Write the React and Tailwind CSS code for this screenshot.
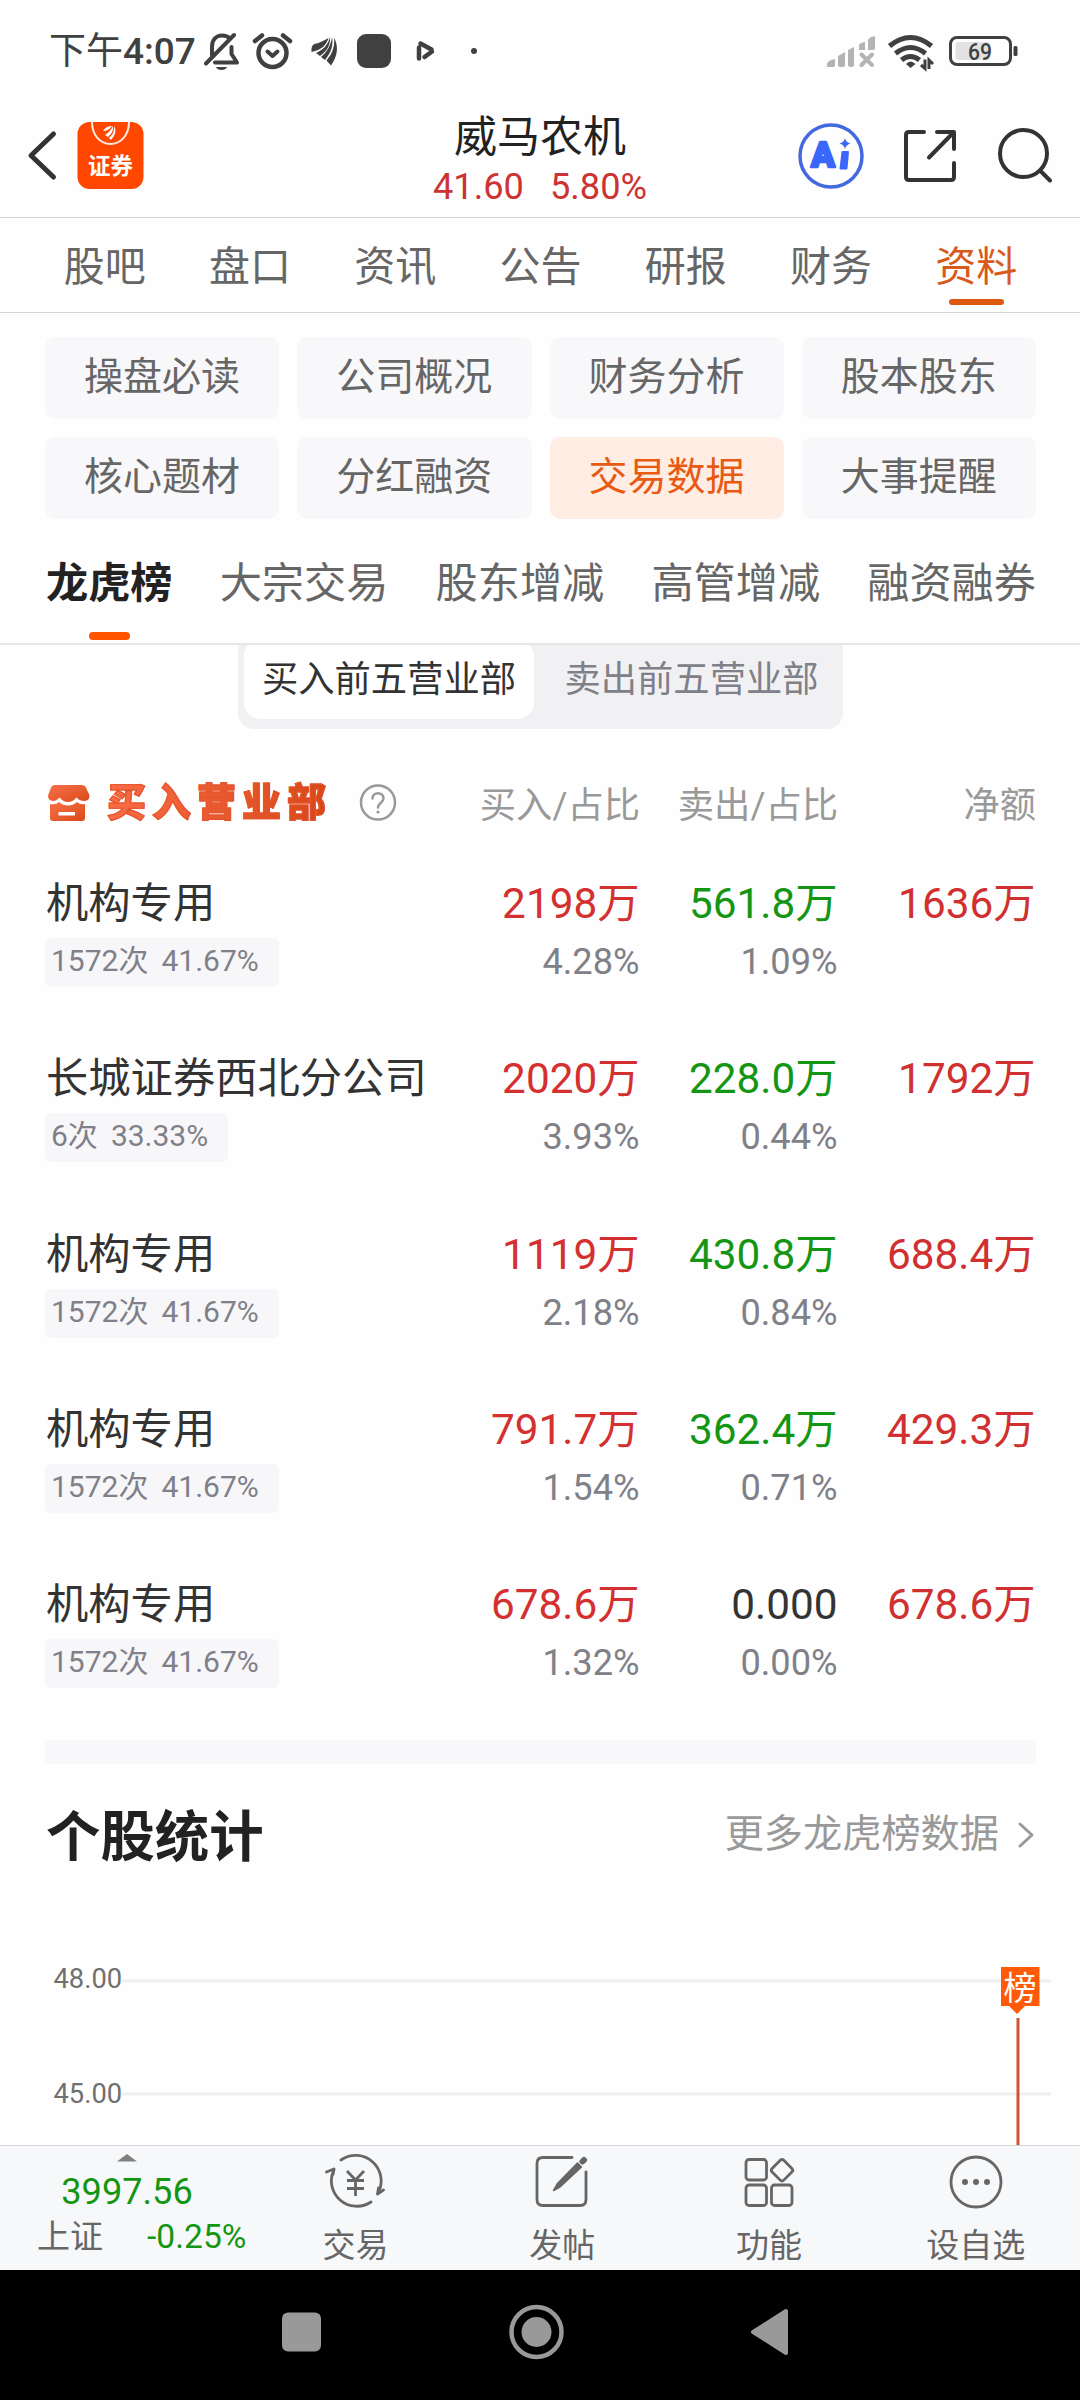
import React from "react";

function StatusBar() {
  return (
    <div className="flex h-[104px] items-start pl-[49px] pt-[31px] text-[#404040]">
      <div className="h-[42px] w-[155px] whitespace-nowrap text-[37px] leading-[42px]">
        下午<span className="font-medium">4:07</span>
      </div>
      <svg className="h-[42px] w-[300px]" viewBox="204 31 300 42" fill="none" stroke="#404040" strokeWidth="4">
        <path d="M212 55V47c0-7 4-11.500 10-11.500 3 0 6 1 8 3M231.500 47v7l5.500 8.500h-22" strokeLinecap="round" strokeLinejoin="round" />
        <path d="M206 63.500l28-28.500" strokeLinecap="round" />
        <path d="M216 67h11c-1 4-10 4-11 0z" fill="#404040" stroke="none" />
        <circle cx="272.500" cy="53" r="14" strokeWidth="4.500" />
        <path d="M267.500 51.500l5 4.500 5-4.500" strokeLinecap="round" strokeLinejoin="round" />
        <path d="M255 41l7-5.500M290 41l-7-5.500" strokeLinecap="round" strokeWidth="4.500" />
        <g fill="#404040" stroke="none">
          <path d="M311.500 52c-.5-4 .5-7 3-8 5-1 10-4 14-6-2 7-7 12-17 14z" />
          <path d="M330 37c.5 8-3 14-10 19l-4-3c7-3 12-8 14-16z" />
          <path d="M332 37c1.500 8-1 16-7 23l-4-3c6-5 10-12 11-20z" />
          <path d="M334 37.500c5 9 3.500 19-3 28l-4.500-5c6-7 8.500-14 7.500-23z" />
          <rect x="357" y="34" width="34" height="34" rx="9" />
          <circle cx="474" cy="51" r="3" />
        </g>
        <path d="M419 47.500v11M424.500 57l7.500-5.500M420.500 43.500l11 6" strokeLinecap="round" strokeWidth="4.500" />
      </svg>
      <svg className="ml-[322px] h-[42px] w-[194px]" viewBox="826 31 194 42" fill="none">
        <path
          d="M827 67v-3q1-4 8-5v6q0 2-2 2zM838 65V56l7-4v13q0 2-2 2h-3q-2 0-2-2zM848 65V50l6-3v18q0 2-2 2h-2q-2 0-2-2zM859 50v-5q1-2 6-3v8zM868 50V40q1-3 7-4v12q0 2-2 2z"
          fill="#b4b4b4"
        />
        <path d="M861.500 54.500l10.500 10.500M872 54.500L861.500 65" stroke="#b4b4b4" strokeWidth="4" strokeLinecap="round" />
        <g stroke="#404040" strokeWidth="5">
          <path d="M889.500 46q21-17 42 0" />
          <path d="M895.500 53.500q15-12 30 0" />
          <path d="M901.500 60q9-7 18 0" />
        </g>
        <path d="M910.500 68l-4.500-4q4.500-5 9.500 0z" fill="#404040" />
        <path d="M925 59.500v9l-4-3.500M929 69v-9l4 4" stroke="#404040" strokeWidth="3" />
        <rect x="950.500" y="37.500" width="60" height="27" rx="6.500" stroke="#404040" strokeWidth="3" />
        <rect x="955.500" y="42" width="35" height="18" rx="3" fill="#e2e2e2" />
        <rect x="1013.500" y="46" width="4" height="10" rx="1.500" fill="#404040" />
        <text x="980" y="60" textAnchor="middle" fontSize="24" fontWeight="500" fontFamily="Roboto" textLength="24" lengthAdjust="spacingAndGlyphs" fill="#404040">69</text>
      </svg>
    </div>
  );
}

function Header() {
  return (
    <div className="flex h-[114px] items-start border-b border-[#d6d6d6]">
      <svg className="mt-[18px] h-[67px] w-[144px]" viewBox="0 122 144 67" fill="none">
        <path d="M53.500 134L31 155.500 53.500 177" stroke="#333" strokeWidth="5" strokeLinecap="round" strokeLinejoin="round" />
        <rect x="77.500" y="122" width="66" height="67" rx="12" fill="#ff4700" />
        <path d="M92 122c0 13 8 22 18.500 22S129 135 129 122" stroke="#ffe9df" strokeWidth="2" />
        <g fill="#fff">
          <path d="M103 131q3-5 9-5-3 5-9 5zM105 135q5-3 8-9 1 6-5 11zM109 138q6-5 5-12 4 6-3 14z" />
        </g>
        <text x="110.500" y="173.500" textAnchor="middle" fontSize="22.500" fontWeight="700" fontFamily="Noto Sans CJK SC" fill="#fff">证券</text>
      </svg>
      <div className="flex w-[651px] flex-col items-center pl-[141px]">
        <div className="mt-[7px] h-[52px] text-[43px] leading-[52px] text-[#222]">威马农机</div>
        <div className="mt-[3px] flex h-[42px] gap-[26px] text-[36.200px] leading-[42px] text-[#cc3333]">
          <span>41.60</span>
          <span>5.80%</span>
        </div>
      </div>
      <svg className="mt-[16px] h-[70px] w-[260px]" viewBox="795 120 260 70" fill="none" stroke="#333" strokeWidth="4">
        <circle cx="831" cy="156" r="31" stroke="#4468e0" strokeWidth="3.500" />
        <text x="811" y="166.500" fontSize="35" fontWeight="900" fontFamily="Roboto" fill="#3b66fa" stroke="#3b66fa" strokeWidth="2.500" strokeLinejoin="round">A</text>
        <path d="M842.500 152h5.500l-1.500 16.500h-6z" fill="#3b66fa" stroke="#3b66fa" strokeWidth="2" strokeLinejoin="round" />
        <path d="M845 138q1 4.500 5.500 5.500-4.500 1-5.500 5.500-1-4.500-5.500-5.500 4.500-1 5.500-5.500z" fill="#3b66fa" stroke="none" />
        <path d="M924 132h-15q-3 0-3 3v42q0 3 3 3h42q3 0 3-3v-14M937 132h17v17M953 133l-24 24.500" strokeLinecap="round" strokeLinejoin="round" />
        <circle cx="1023.500" cy="153.500" r="23.500" />
        <path d="M1040 170.500l10 10" strokeLinecap="round" />
      </svg>
    </div>
  );
}

const TABS = ["股吧", "盘口", "资讯", "公告", "研报", "财务", "资料"];

function MainTabs() {
  return (
    <div className="flex h-[95px] border-b border-[#d6d6d6] pl-[32px] pr-[31px] text-[41px] leading-[54px] text-[#666]">
      {TABS.map((t, i) => (
        <div key={t} className="flex flex-1 flex-col items-center pt-[22px]">
          <span className={i === 6 ? "text-[#d8591c]" : ""}>{t}</span>
          {i === 6 && <span className="mt-[5px] h-[6px] w-[55px] rounded-[3px] bg-[#dc590e]" />}
        </div>
      ))}
    </div>
  );
}

const CHIPS = ["操盘必读", "公司概况", "财务分析", "股本股东", "核心题材", "分红融资", "交易数据", "大事提醒"];

function Chips() {
  return (
    <div className="mx-[45px] mt-[24px] grid w-[991px] grid-cols-4 gap-x-[18px] gap-y-[18px]">
      {CHIPS.map((c) => (
        <div
          key={c}
          className={
            c === "交易数据"
              ? "h-[82px] rounded-[10px] bg-[#ffede4] pt-[13px] text-center text-[39px] leading-[54px] text-[#e85a12]"
              : "h-[82px] rounded-[10px] bg-[#f8f8fa] pt-[13px] text-center text-[39px] leading-[54px] text-[#666]"
          }
        >
          {c}
        </div>
      ))}
    </div>
  );
}

function SubTabs() {
  return (
    <div className="flex h-[126px] justify-between border-b-2 border-[#e6e6e8] pl-[46px] pr-[44px] pt-[38px] text-[42.200px] leading-[54px] text-[#666]">
      <div className="flex flex-col items-center">
        <span className="font-bold text-[#222]">龙虎榜</span>
        <span className="mt-[21px] h-[8px] w-[41px] rounded-[4px] bg-[#ff5500]" />
      </div>
      <span>大宗交易</span>
      <span>股东增减</span>
      <span>高管增减</span>
      <span>融资融券</span>
    </div>
  );
}

function Segmented() {
  return (
    <div className="h-[84px] overflow-hidden pl-[238px]">
      <div className="flex h-[84px] w-[605px] rounded-b-[16px] bg-[#f1f1f4] pl-[6px] text-[36.300px] leading-[48px]">
        <div className="-mt-[5px] h-[79px] w-[290px] shrink-0 rounded-[16px] bg-white pt-[16px] text-center text-[#333]">买入前五营业部</div>
        <div className="w-[309px] pl-[6px] pt-[11px] text-center text-[#808088]">卖出前五营业部</div>
      </div>
    </div>
  );
}

const ROWS = [
  ["机构专用", "1572次", "41.67%", "2198万", "4.28%", "561.8万", "1.09%", "1636万"],
  ["长城证券西北分公司", "6次", "33.33%", "2020万", "3.93%", "228.0万", "0.44%", "1792万"],
  ["机构专用", "1572次", "41.67%", "1119万", "2.18%", "430.8万", "0.84%", "688.4万"],
  ["机构专用", "1572次", "41.67%", "791.7万", "1.54%", "362.4万", "0.71%", "429.3万"],
  ["机构专用", "1572次", "41.67%", "678.6万", "1.32%", "0.000", "0.00%", "678.6万"],
];

function TableHead() {
  return (
    <div className="mt-[49px] flex h-[50px] items-center pl-[45px] text-[36.300px] leading-[50px] text-[#999]">
      <svg className="ml-[2px] h-[38px] w-[43px]" viewBox="48 783 43 38">
        <defs>
          <linearGradient id="shop" x1="0" y1="0" x2="1" y2="1">
            <stop offset="0" stopColor="#f8704a" />
            <stop offset="1" stopColor="#d94a18" />
          </linearGradient>
        </defs>
        <path d="M55 784h28q3 0 4 2.500l3.500 8q0 5-5 5.500-5 0-8-3.500-4 4.500-8.500 4.500t-8.500-4.500q-3 3.500-7 3.500-4.500-1-4.500-5.500l3-8q1-2.500 3-2.500z" fill="url(#shop)" />
        <path fillRule="evenodd" d="M51 803q6 1 9-2 4 3.500 9 3.500t9-3.500q3 3 8 2v14q0 3-3 3H54q-3 0-3-3zM59.500 811v3.500h16.500V811z" fill="url(#shop)" />
      </svg>
      <span className="ml-[17px] w-[232px] whitespace-nowrap bg-gradient-to-r from-[#fa6c46] to-[#d54512] bg-clip-text text-[39px] font-black leading-[50px] tracking-[6px] text-transparent [-webkit-text-stroke:1px_#e65228]">
        买入营业部
      </span>
      <svg className="ml-[20px] h-[38px] w-[38px]" viewBox="0 0 38 38" fill="none" stroke="#999" strokeWidth="2.500">
        <circle cx="19" cy="18.500" r="17" />
        <path d="M13.500 14.500c0-7 11-7 11 0 0 4-5.500 4.500-5.500 9" strokeLinecap="round" />
        <circle cx="19" cy="28" r="1.600" fill="#999" stroke="none" />
      </svg>
      <span className="w-[243px] pt-[5px] text-right">买入/占比</span>
      <span className="w-[198px] pt-[5px] text-right">卖出/占比</span>
      <span className="w-[198px] pt-[5px] text-right">净额</span>
    </div>
  );
}

function Row({ r }) {
  return (
    <div className="flex h-[175.300px] pl-[45px]">
      <div className="w-[396.500px]">
        <div className="h-[58px] whitespace-nowrap pl-px text-[42.300px] leading-[58px] text-[#333]">{r[0]}</div>
        <div className="mt-[5px] inline-flex h-[49px] gap-[13px] rounded-[6px] bg-[#f7f7fa] pl-[6px] pr-[20px] text-[30px] leading-[46px] text-[#808088]">
          <span>{r[1]}</span>
          <span>{r[2]}</span>
        </div>
      </div>
      <div className="w-[198px] text-right">
        <div className="h-[58px] text-[42.300px] leading-[58px] text-[#d43030]">{r[3]}</div>
        <div className="text-[36.200px] leading-[58px] text-[#808088]">{r[4]}</div>
      </div>
      <div className="w-[198px] text-right">
        <div className={r[5] === "0.000" ? "h-[58px] text-[42.300px] leading-[58px] text-[#333]" : "h-[58px] text-[42.300px] leading-[58px] text-[#149614]"}>{r[5]}</div>
        <div className="text-[36.200px] leading-[58px] text-[#808088]">{r[6]}</div>
      </div>
      <div className="w-[198px] text-right text-[42.300px] leading-[58px] text-[#d03030]">{r[7]}</div>
    </div>
  );
}

function Stats() {
  return (
    <>
      <div className="mx-[45px] h-[24px] w-[991px] bg-[#f8f8fa]" />
      <div className="mt-[36px] flex h-[72px] items-center justify-between pl-[46px] pr-[45px]">
        <span className="pt-[4px] text-[54.400px] font-bold leading-[72px] text-[#222]">个股统计</span>
        <span className="flex items-center pb-[4px] text-[39.200px] leading-[64px] text-[#999]">
          更多龙虎榜数据
          <svg className="ml-[18px] mt-[2px] h-[28px] w-[18px]" viewBox="0 0 18 28" fill="none" stroke="#999" strokeWidth="3">
            <path d="M3 3l12 11L3 25" strokeLinecap="round" strokeLinejoin="round" />
          </svg>
        </span>
      </div>
      <svg className="mt-[73px] h-[200px] w-[1080px]" viewBox="0 1945 1080 200" fontFamily="Roboto, Noto Sans CJK SC">
        <rect x="122" y="1979.500" width="929" height="3" fill="#efefef" />
        <rect x="122" y="2092.500" width="929" height="3" fill="#efefef" />
        <text x="53.500" y="1987.500" fontSize="27.300" fill="#707070">48.00</text>
        <text x="53.500" y="2102.500" fontSize="27.300" fill="#707070">45.00</text>
        <path d="M1001 1967h38.500v39h-14.500l-8 8-8-8h-8z" fill="#ff5a08" />
        <text x="1020" y="1999.500" fontSize="33" fill="#fff" textAnchor="middle">榜</text>
        <rect x="1016.500" y="2018" width="3" height="127" fill="#cf5530" />
      </svg>
    </>
  );
}

function NavItem({ label, children }) {
  return (
    <div className="flex w-[206.800px] flex-col items-center pt-[6px]">
      <svg className="h-[60px] w-[60px]" viewBox="0 0 60 60" fill="none" stroke="#666" strokeWidth="2.800" strokeLinecap="round" strokeLinejoin="round">
        {children}
      </svg>
      <span className="mt-[12px] text-[33px] leading-[44px] text-[#666]">{label}</span>
    </div>
  );
}

function BottomBar() {
  return (
    <div className="flex h-[125px] border-t border-[#d4d4d6] bg-[#f7f8fa]">
      <div className="flex w-[252px] flex-col items-center">
        <svg className="ml-[2px] mt-[8px] h-[8px] w-[20px]" viewBox="0 0 20 8">
          <path d="M0 7.500L10 0l10 7.500z" fill="#808080" />
        </svg>
        <div className="ml-[2px] mt-[7px] h-[46px] text-[36.200px] leading-[46px] text-[#149614]">3997.56</div>
        <div className="flex w-full justify-between pl-[37px] pr-[4px] text-[33px] leading-[44px] text-[#666]">
          <span>上证</span>
          <span className="w-[101px] whitespace-nowrap text-[33.600px] text-[#149614]">-0.25%</span>
        </div>
      </div>
      <NavItem label="交易">
        <path d="M16 8A25.500 25.500 0 0 1 52.500 42l6-4M9 17.500A25.500 25.500 0 0 0 46 50M1.500 20l7.500-3M52.500 42l1-6M9 17.500l-1 5" />
        <path d="M22 19l8.500 9 8.500-9M22 28.500h17M22 36.500h17M30.500 28v16" strokeLinecap="butt" />
      </NavItem>
      <NavItem label="发帖">
        <path d="M40 5.500H11q-6 0-6 6v36q0 6 6 6h37q6 0 6-6V20" />
        <path d="M45.500 11L25 32l-3.500 6.500L28 35 49.500 15z" fill="#666" strokeWidth="1.500" />
        <path d="M50.500 9.500l1.500-1.500" strokeWidth="6" />
      </NavItem>
      <NavItem label="功能">
        <rect x="7" y="7.500" width="20.500" height="20.500" rx="3" />
        <rect x="7" y="33" width="20.500" height="20.500" rx="3" />
        <rect x="32.500" y="33" width="20.500" height="20.500" rx="3" />
        <rect x="34.700" y="10" width="16.500" height="16.500" rx="2.500" transform="rotate(45 43 18.300)" />
      </NavItem>
      <NavItem label="设自选">
        <circle cx="30" cy="30" r="25" />
        <g fill="#666" stroke="none">
          <circle cx="19" cy="30" r="3" />
          <circle cx="30" cy="30" r="3" />
          <circle cx="41" cy="30" r="3" />
        </g>
      </NavItem>
    </div>
  );
}

function SystemNav() {
  return (
    <div className="flex h-[130px] bg-black pl-[282px] pt-[34px]">
      <svg className="h-[56px] w-[510px]" viewBox="282 2304 510 56" fill="#999">
        <rect x="282" y="2312.500" width="39" height="39" rx="6" />
        <circle cx="536.500" cy="2332" r="25" fill="none" stroke="#999" strokeWidth="4.500" />
        <circle cx="536.500" cy="2332" r="15" />
        <path d="M753 2332l33-21v42z" stroke="#999" strokeWidth="4" strokeLinejoin="round" />
      </svg>
    </div>
  );
}

export default function App() {
  return (
    <div className="flex h-[2400px] w-[1080px] flex-col overflow-hidden bg-[#fefefe] font-[Roboto,'Noto_Sans_CJK_SC',sans-serif]" lang="zh-CN">
      <StatusBar />
      <Header />
      <MainTabs />
      <Chips />
      <SubTabs />
      <Segmented />
      <TableHead />
      <div className="mt-[47px] h-[865px] shrink-0">
        {ROWS.map((r, i) => (
          <Row key={i} r={r} />
        ))}
      </div>
      <Stats />
      <BottomBar />
      <SystemNav />
    </div>
  );
}
